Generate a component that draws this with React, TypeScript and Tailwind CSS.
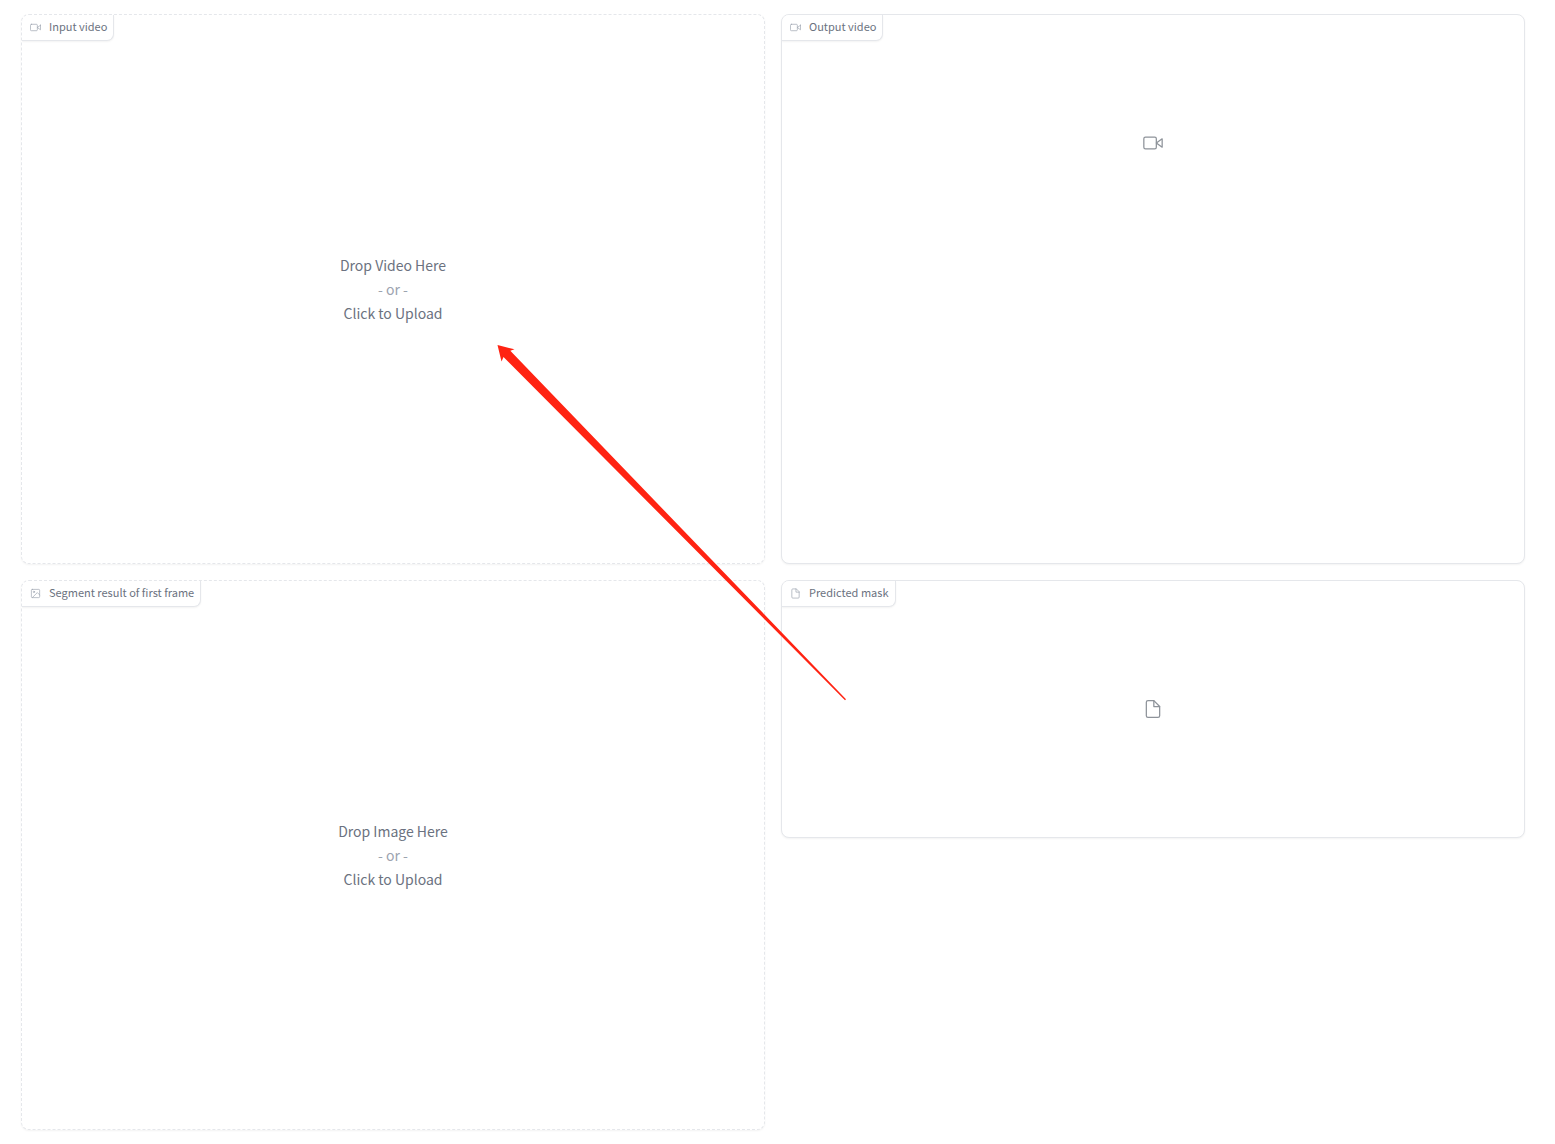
import type { ReactNode } from "react";

type IconProps = { className: string };

function Svg({ className, children }: IconProps & { children: ReactNode }) {
  return (
    <svg
      className={className}
      viewBox="0 0 24 24"
      fill="none"
      stroke="currentColor"
      strokeWidth="1.5"
      strokeLinecap="round"
      strokeLinejoin="round"
      aria-hidden="true"
    >
      {children}
    </svg>
  );
}

function VideoIcon({ className }: IconProps) {
  return (
    <Svg className={className}>
      <polygon points="23 7 16 12 23 17 23 7" />
      <rect x="1" y="5" width="15" height="14" rx="2" ry="2" />
    </Svg>
  );
}

function ImageIcon({ className }: IconProps) {
  return (
    <Svg className={className}>
      <rect x="3" y="3" width="18" height="18" rx="2" ry="2" />
      <circle cx="8.5" cy="8.5" r="1.5" />
      <polyline points="21 15 16 10 5 21" />
    </Svg>
  );
}

function FileIcon({ className }: IconProps) {
  return (
    <Svg className={className}>
      <path d="M13 2H6a2 2 0 0 0-2 2v16a2 2 0 0 0 2 2h12a2 2 0 0 0 2-2V9z" />
      <polyline points="13 2 13 9 20 9" />
    </Svg>
  );
}

function BlockLabel({ icon, children }: { icon: ReactNode; children: ReactNode }) {
  return (
    <h2 className="absolute top-0 left-0 flex h-[26px] items-center gap-2 rounded-br-[7px] border-r border-b border-[#e5e7eb] bg-white pr-1.5 pl-2 text-[11px] leading-4 text-[#6b7280] shadow-[0_1px_2px_rgba(0,0,0,0.05)]">
      <span className="text-[#9ca3af]">{icon}</span>
      <span className="pb-1">{children}</span>
    </h2>
  );
}

function UploadBlock({ icon, label, kind }: { icon: ReactNode; label: string; kind: string }) {
  return (
    <section className="relative flex min-h-[550px] overflow-hidden rounded-lg border border-dashed border-[#e5e7eb] bg-white shadow-[0_1px_2px_rgba(0,0,0,0.05)]">
      <BlockLabel icon={icon}>{label}</BlockLabel>
      <button
        type="button"
        className="flex flex-1 cursor-pointer flex-col items-center justify-center text-[14px] leading-6 text-[#6b7280]"
      >
        <span>Drop {kind} Here</span>
        <span className="text-[#9ca3af]">- or -</span>
        <span>Click to Upload</span>
      </button>
    </section>
  );
}

function OutputBlock({
  icon,
  label,
  placeholder,
  tall,
}: {
  icon: ReactNode;
  label: string;
  placeholder: ReactNode;
  tall?: boolean;
}) {
  return (
    <section
      className={`relative overflow-hidden rounded-lg border border-[#e5e7eb] bg-white shadow-[0_1px_2px_rgba(0,0,0,0.05)] ${tall ? "min-h-[550px]" : ""}`}
    >
      <BlockLabel icon={icon}>{label}</BlockLabel>
      <div className="flex h-64 items-center justify-center text-[#1f2937] opacity-50">
        {placeholder}
      </div>
    </section>
  );
}

function PointerArrow() {
  return (
    <svg
      className="pointer-events-none absolute top-[345px] left-[497px]"
      width="350"
      height="356"
      viewBox="0 0 350 356"
      aria-hidden="true"
    >
      <polygon
        fill="#ff2312"
        points="0.5,0 17.5,4.3 13.3,5.8 349,354.2 348,355.2 6.5,12 4.5,16.5"
      />
    </svg>
  );
}

export default function App() {
  return (
    <main className="relative min-h-screen bg-white pt-3.5 pr-[30px] pb-3.5 pl-[21px] font-['Noto_Sans_CJK_SC',sans-serif]">
      <div className="grid grid-cols-2 items-start gap-4">
        <div className="flex flex-col gap-4">
          <UploadBlock icon={<VideoIcon className="size-[11px]" />} label="Input video" kind="Video" />
          <UploadBlock
            icon={<ImageIcon className="size-[11px]" />}
            label="Segment result of first frame"
            kind="Image"
          />
        </div>
        <div className="flex flex-col gap-4">
          <OutputBlock
            icon={<VideoIcon className="size-[11px]" />}
            label="Output video"
            placeholder={<VideoIcon className="size-5" />}
            tall
          />
          <OutputBlock
            icon={<FileIcon className="size-[11px]" />}
            label="Predicted mask"
            placeholder={<FileIcon className="size-5" />}
          />
        </div>
      </div>
      <PointerArrow />
    </main>
  );
}
